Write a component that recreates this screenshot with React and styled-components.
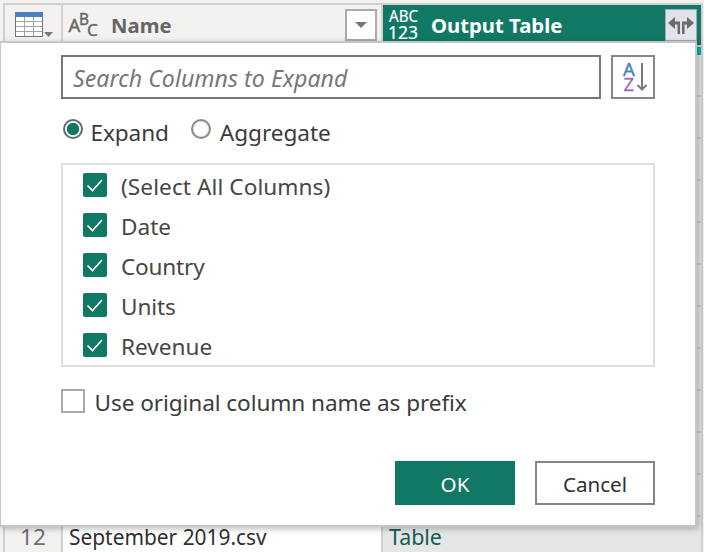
import React from "react";
import styled, { createGlobalStyle } from "styled-components";

const green = "#127866";

const GlobalStyle = createGlobalStyle`
  *, *::before, *::after { box-sizing: border-box; }
  body {
    margin: 0;
    background: #f3f2f1;
    font-family: "Noto Sans", "Open Sans", sans-serif;
  }
`;

const Screen = styled.main`
  position: relative;
  width: 704px;
  height: 552px;
  padding: 3px 1px 0 3px;
  overflow: hidden;
  background: #f3f2f1;
`;

const Grid = styled.div`
  display: grid;
  grid-template-columns: 56px 318px 318px;
  grid-template-rows: 40px 10px;
  grid-auto-rows: 42px;
  column-gap: 2px;
  width: 700px;
  padding: 2px 2px 0;
  background: #d0d0d0;
`;

const HeaderCell = styled.div`
  display: flex;
  align-items: flex-start;
  position: relative;
  height: 40px;
  padding: 0 4px;
  background: ${(p) => (p.$selected ? green : "#f3f2f1")};
  color: ${(p) => (p.$selected ? "#fff" : "#666")};
`;

const ColumnName = styled.span`
  flex: 1;
  margin-left: ${(p) => p.$gap}px;
  font-size: 20.3px;
  font-weight: 700;
  line-height: 40px;
  white-space: nowrap;
`;

const HeaderButton = styled.button`
  display: flex;
  align-items: center;
  justify-content: center;
  width: 32px;
  height: 32px;
  margin-top: 4px;
  padding: 0;
  border: ${(p) => (p.$active ? "1px solid #a3a9b5" : "2px solid #ababab")};
  background: ${(p) => (p.$active ? "linear-gradient(#dde1e8, #e5e6ec)" : "#fff")};
`;

const QualityCell = styled.div`
  margin-top: 2px;
  height: 8px;
  background: ${(p) => (p.$filled ? "#00b7a8" : "#f3f2f1")};
`;

const Cell = styled.div`
  height: 40px;
  padding: 0 6px;
  background: ${(p) => (p.$kind === "table" ? "#e6e6e6" : p.$kind === "index" ? "#f3f2f1" : "#fff")};
  color: ${(p) => (p.$kind === "table" ? "#115e50" : p.$kind === "index" ? "#6f6f6f" : "#303030")};
  font-size: ${(p) => (p.$kind === "table" ? 21.4 : p.$kind === "index" ? 22.6 : 20.9)}px;
  line-height: 40px;
  text-align: ${(p) => (p.$kind === "index" ? "center" : "left")};
  white-space: nowrap;
`;

const Popup = styled.section`
  position: absolute;
  left: 0;
  top: 41px;
  width: 697px;
  height: 486px;
  padding: 12px 40px 20px 60px;
  border: 2px solid #c5c5c5;
  border-left-width: 1px;
  background: #fff;
  box-shadow: 2px 2px 6px rgba(0, 0, 0, 0.25);
  color: #3b3b3b;
`;

const SearchRow = styled.div`
  display: flex;
  gap: 10px;
`;

const SearchBox = styled.div`
  width: 540px;
  height: 44px;
  padding-left: 10px;
  border: 2px solid #777;
  color: #777;
  font-size: 23.1px;
  font-style: italic;
  letter-spacing: 0.05px;
  line-height: 43px;
`;

const SortButton = styled.button`
  width: 44px;
  height: 44px;
  padding: 0;
  border: 2px solid #878787;
  background: #fff;
`;

const RadioGroup = styled.div`
  display: flex;
  margin-top: 20px;
  height: 26px;
`;

const RadioOption = styled.label`
  display: flex;
  align-items: flex-start;
  margin-left: ${(p) => p.$indent}px;
`;

const Radio = styled.span`
  width: 20px;
  height: 20px;
  border: 2px solid ${(p) => (p.$checked ? "#5d6d69" : "#8b8b8b")};
  border-radius: 50%;
  background: ${(p) =>
    p.$checked
      ? `radial-gradient(circle, ${green} 5.8px, #fff 6.6px)`
      : "radial-gradient(circle, #fff 6px, #e2e2e2 8px)"};
`;

const Label = styled.span`
  margin-left: ${(p) => p.$gap}px;
  font-size: 22.6px;
  letter-spacing: ${(p) => p.$spacing || 0}px;
  line-height: 28px;
  white-space: nowrap;
`;

const ColumnList = styled.div`
  display: flex;
  flex-direction: column;
  gap: 14px;
  width: 594px;
  height: 204px;
  margin-top: 18px;
  padding: 8px 20px;
  border: 2px solid #dce0e3;
  color: #484644;
`;

const CheckRow = styled.label`
  display: flex;
  align-items: flex-start;
  height: 26px;
`;

const CheckBox = styled.span`
  display: flex;
  width: 24px;
  height: 24px;
  border: ${(p) => (p.$checked ? "0" : "2px solid #a9a9a9")};
  border-radius: ${(p) => (p.$checked ? 2 : 0)}px;
  background: ${(p) => (p.$checked ? green : "#fff")};
`;

const PrefixRow = styled(CheckRow)`
  margin-top: 22px;
`;

const Actions = styled.footer`
  display: flex;
  justify-content: flex-end;
  gap: 20px;
  margin-top: 46px;
`;

const ActionButton = styled.button`
  width: 120px;
  height: 44px;
  padding: 2px 0 0;
  border: 2px solid ${(p) => (p.$primary ? green : "#858585")};
  background: ${(p) => (p.$primary ? green : "#fff")};
  color: ${(p) => (p.$primary ? "#fff" : "#303030")};
  font-family: inherit;
  font-size: 20.6px;
  line-height: 38px;
`;

const Drawing = styled.svg`
  display: block;
  flex: none;
  font-family: "Noto Sans", sans-serif;
`;

const TableIcon = () => (
  <Drawing width="48" height="40" viewBox="0 0 48 40">
    <rect x="6.5" y="7.5" width="27" height="24" fill="#fff" stroke="#737373" />
    <rect x="6" y="7" width="28" height="5" fill="#4a80bd" />
    <path d="M15.500 12v19M24.500 12v19M7 16.500h26M7 21.500h26M7 26.500h26" stroke="#a3a3a3" fill="none" />
    <path d="M35 27h9l-4.500 5z" fill="#777" />
  </Drawing>
);

const TextTypeIcon = () => (
  <Drawing width="34" height="40" viewBox="0 0 34 40" fill="#666" stroke="#666" strokeWidth=".4">
    <text x="1.500" y="27.300" fontSize="18.500">A</text>
    <text x="12" y="20" fontSize="16.500" textLength="10" lengthAdjust="spacingAndGlyphs">B</text>
    <text x="20" y="31" fontSize="17">C</text>
  </Drawing>
);

const AnyTypeIcon = () => (
  <Drawing width="34" height="40" viewBox="0 0 34 40" fill="#fff" stroke="#fff" strokeWidth=".2">
    <text x="2" y="17" fontSize="15.500" textLength="29" lengthAdjust="spacingAndGlyphs">ABC</text>
    <text x="1" y="34" fontSize="18.500" textLength="30" lengthAdjust="spacingAndGlyphs">123</text>
  </Drawing>
);

const CaretIcon = () => (
  <Drawing width="12" height="6" viewBox="0 0 12 6">
    <path d="M0 0h12L6 6z" fill="#777" />
  </Drawing>
);

const ExpandIcon = () => (
  <Drawing width="30" height="30" viewBox="0 0 30 30" fill="#6b6b6b">
    <path d="M2 13l7-6v4.500h5V24h-2.500V14.500H9V19z" />
    <path d="M28 13l-7-6v4.500h-5V24h2.500V14.500H21V19z" />
  </Drawing>
);

const SortIcon = () => (
  <Drawing width="40" height="40" viewBox="0 0 40 40">
    <text x="10" y="19" fontSize="18.500" fill="#4a80bd" stroke="#4a80bd" strokeWidth=".4">A</text>
    <text x="10.500" y="34" fontSize="18.500" fill="#a066c0" stroke="#a066c0" strokeWidth=".3">Z</text>
    <path d="M29 6v26M24.500 28l4.500 4.500 4.500-4.500" fill="none" stroke="#7a7a7a" strokeWidth="2" />
  </Drawing>
);

const CheckIcon = () => (
  <Drawing width="24" height="24" viewBox="0 0 24 24">
    <path d="M4.500 12.500l5 5L19 7" fill="none" stroke="#fff" strokeWidth="1.700" />
  </Drawing>
);

const columns = [
  ["(Select All Columns)", 0.08],
  ["Date", 0],
  ["Country", -0.2],
  ["Units", -0.1],
  ["Revenue", 0],
];

const rows = [1, 2, 3, 4, 5, 6, 7, 8, 9, 10, 11];

export default function App() {
  return (
    <>
      <GlobalStyle />
      <Screen>
        <Grid>
          <HeaderCell>
            <TableIcon />
          </HeaderCell>
          <HeaderCell>
            <TextTypeIcon />
            <ColumnName $gap={10}>Name</ColumnName>
            <HeaderButton>
              <CaretIcon />
            </HeaderButton>
          </HeaderCell>
          <HeaderCell $selected>
            <AnyTypeIcon />
            <ColumnName $gap={10}>Output Table</ColumnName>
            <HeaderButton $active>
              <ExpandIcon />
            </HeaderButton>
          </HeaderCell>
          <QualityCell />
          <QualityCell />
          <QualityCell $filled />
          {rows.map((n) => (
            <React.Fragment key={n}>
              <Cell $kind="index" />
              <Cell />
              <Cell $kind="table" />
            </React.Fragment>
          ))}
          <Cell $kind="index">12</Cell>
          <Cell>September 2019.csv</Cell>
          <Cell $kind="table">Table</Cell>
        </Grid>

        <Popup>
          <SearchRow>
            <SearchBox>Search Columns to Expand</SearchBox>
            <SortButton>
              <SortIcon />
            </SortButton>
          </SearchRow>
          <RadioGroup>
            <RadioOption $indent={2}>
              <Radio $checked />
              <Label $gap={7.5} $spacing={-0.1}>Expand</Label>
            </RadioOption>
            <RadioOption $indent={22}>
              <Radio />
              <Label $gap={9} $spacing={-0.05}>Aggregate</Label>
            </RadioOption>
          </RadioGroup>
          <ColumnList>
            {columns.map(([name, spacing]) => (
              <CheckRow key={name}>
                <CheckBox $checked>
                  <CheckIcon />
                </CheckBox>
                <Label $gap={14} $spacing={spacing}>
                  {name}
                </Label>
              </CheckRow>
            ))}
          </ColumnList>
          <PrefixRow>
            <CheckBox />
            <Label $gap={9.5} $spacing={-0.08}>
              Use original column name as prefix
            </Label>
          </PrefixRow>
          <Actions>
            <ActionButton $primary>OK</ActionButton>
            <ActionButton>Cancel</ActionButton>
          </Actions>
        </Popup>
      </Screen>
    </>
  );
}
